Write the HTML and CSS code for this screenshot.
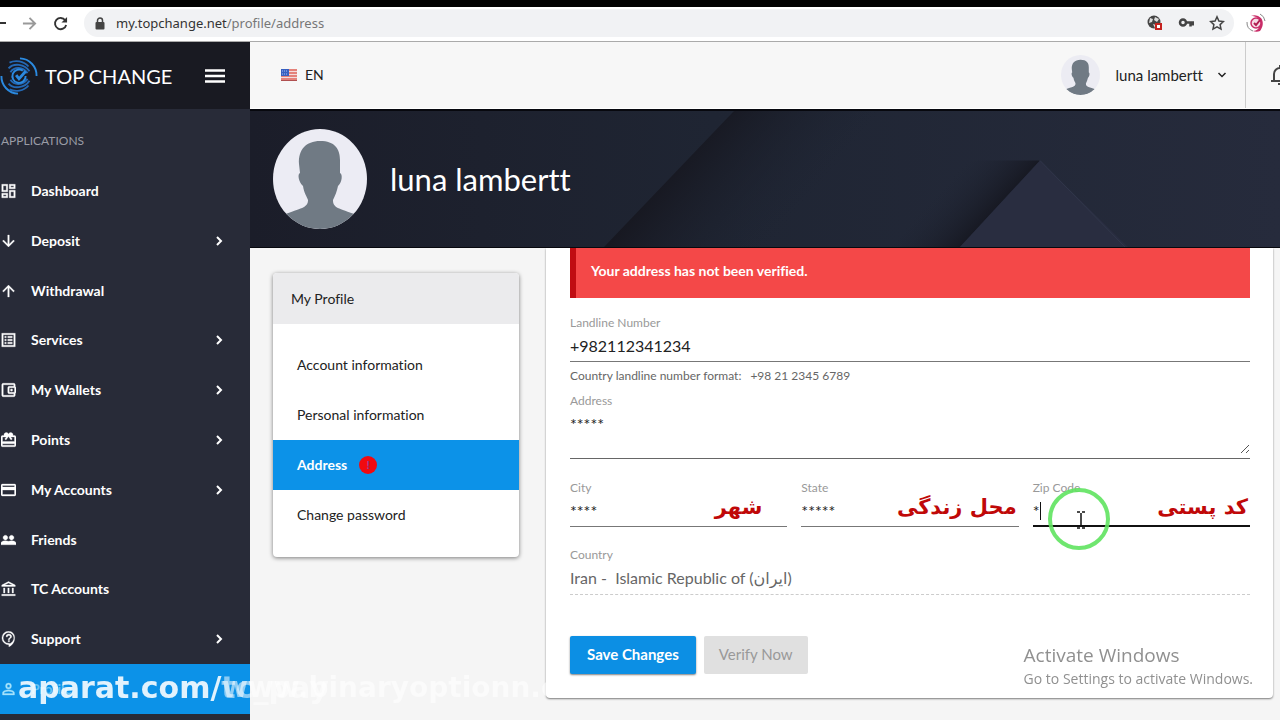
FILE: index.html
```html
<!DOCTYPE html>
<html lang="en">
<head>
<meta charset="utf-8">
<meta name="viewport" content="width=device-width, initial-scale=1">
<title>Top Change - Address</title>
<link rel="stylesheet" href="styles.css">
</head>
<body>
<svg class="defs" aria-hidden="true">
  <symbol id="chev" viewBox="0 0 10 12"><path d="M3 2l4 4-4 4" fill="none" stroke="currentColor" stroke-width="2"/></symbol>
  <symbol id="person" viewBox="0 0 94 100" preserveAspectRatio="none"><path fill="#707a84" d="M47 12C33 12 25 21 26 35L27 44C24 45 26 54 30 57C31 64 34 68 35 71C35 79 28 79 10 86C22 96 34 100 47 100S72 96 84 86C65 79 60 79 60 71C62 67 64 62 65 57C69 54 70 45 67 44L67 31C67 20 62 12 47 12Z"/></symbol>
  <symbol id="swirl" viewBox="0 0 40 40"><g fill="none" stroke="currentColor"><path d="M21 1.500A18 18 0 0 1 38.500 20M1.500 20A18 18 0 0 0 19 38.500" stroke-width="2"/><g stroke="#2468b4" stroke-width="2"><path d="M10 6C16 3 25 4 30 10M10 34C16 37 25 36 30 30"/><path d="M9 12C14 6 26 7 31 15M9 28C14 34 26 33 31 25"/><path d="M11 16C15 10 24 10 29 17M11 24C15 30 24 30 29 23"/></g><path d="M24 14.500A7 7 0 1 0 27 20" stroke-width="2"/><path d="M17 19l3 4 7-8" stroke-width="3"/></g></symbol>
</svg>

<header class="browser">
  <svg class="back" viewBox="0 0 6 16"><path d="M0 8h6" stroke="#333" stroke-width="2"/></svg>
  <svg class="nav-icon forward" viewBox="0 0 16 16"><path d="M1 8h13M8 2l6 6-6 6" fill="none" stroke="#999" stroke-width="2"/></svg>
  <svg class="nav-icon" viewBox="0 0 16 16"><path d="M13 4.500A6 6 0 1 0 14 9.500" fill="none" stroke="#333" stroke-width="2"/><path d="M15 1v6H9z" fill="#333"/></svg>
  <div class="omnibox">
    <svg class="lock" viewBox="0 0 10 13"><rect x="0.500" y="5" width="9" height="7.500" rx="1" fill="#444"/><path d="M2.500 5V3.500a2.500 2.500 0 0 1 5 0V5" fill="none" stroke="#444" stroke-width="1.500"/></svg>
    <span class="url">my.topchange.net<span class="path">/profile/address</span></span>
    <svg class="omni-icon" viewBox="0 0 16 16"><circle cx="7" cy="7" r="6.500" fill="#444"/><path d="M3 3l3 1-1 3-3 1zM8 2l4 2-2 3-3-2zM6 9l3 1-1 3z" fill="#ddd"/><rect x="8" y="8" width="7" height="7" fill="#c5221f"/><rect x="10" y="10" width="3" height="3" fill="#fff"/></svg>
    <svg class="omni-icon" viewBox="0 0 16 16"><circle cx="5" cy="7.500" r="3" fill="none" stroke="#444" stroke-width="2.500"/><path d="M8 7.500h7v3M12.500 7.500v4" fill="none" stroke="#444" stroke-width="2.500"/></svg>
    <svg class="omni-icon" viewBox="0 0 16 16"><path d="M8 1.800l1.900 4.200 4.500.5-3.300 3.100.9 4.500-4-2.300-4 2.300.9-4.500-3.300-3.100 4.500-.5z" fill="none" stroke="#444" stroke-width="1.500"/></svg>
  </div>
  <svg class="ext" viewBox="0 0 20 20"><path d="M5 3a9 9 0 0 1 10 2c3 4 2 9-1 13a9 9 0 0 1-7 0c4 0 7-3 7-8s-4-7-9-7z" fill="#c92d68"/><circle cx="10" cy="10" r="5" fill="#f5dce6" stroke="#c92d68" stroke-width="1.500"/><path d="M8 10l2 2 4-5" fill="none" stroke="#b01c50" stroke-width="2"/><path d="M1 9a9 9 0 0 0 6 9M14 1a9 9 0 0 1 5 7" fill="none" stroke="#888"/></svg>
</header>

<div class="app">
  <aside class="sidebar">
    <div class="brand">
      <svg class="logo"><use href="#swirl"/></svg>
      <span class="brand-name">TOP CHANGE</span>
      <button class="burger" aria-label="Toggle menu"><svg viewBox="0 0 20 14"><path d="M0 1.500h20M0 7h20M0 12.500h20" stroke="#fff" stroke-width="2.500"/></svg></button>
    </div>
    <div class="section">APPLICATIONS</div>
    <nav class="menu">
      <a href="#"><svg viewBox="2 2 20 20"><path d="M19 5v2h-4V5h4M9 5v6H5V5h4m10 8v6h-4v-6h4M9 17v2H5v-2h4M21 3h-8v6h8V3zM11 3H3v10h8V3zm10 8h-8v10h8V11zm-10 4H3v6h8v-6z"/></svg><span>Dashboard</span></a>
      <a href="#"><svg viewBox="2 2 20 20"><path d="M20 12l-1.410-1.410L13 16.170V4h-2v12.170l-5.580-5.590L4 12l8 8 8-8z"/></svg><span>Deposit</span><svg class="chev"><use href="#chev"/></svg></a>
      <a href="#"><svg viewBox="2 2 20 20"><path d="M4 12l1.410 1.410L11 7.830V20h2V7.830l5.580 5.590L20 12l-8-8-8 8z"/></svg><span>Withdrawal</span></a>
      <a href="#"><svg viewBox="2 2 20 20"><path fill-rule="evenodd" d="M3 3h18v18H3zM5 5v14h14V5zM7 7h2v2H7zM11 7h6v2h-6zM7 11h2v2H7zM11 11h6v2h-6zM7 15h2v2H7zM11 15h6v2h-6z"/></svg><span>Services</span><svg class="chev"><use href="#chev"/></svg></a>
      <a href="#"><svg viewBox="2 2 20 20"><path d="M21 7.280V5c0-1.100-.9-2-2-2H5c-1.110 0-2 .9-2 2v14c0 1.100.890 2 2 2h14c1.100 0 2-.9 2-2v-2.280c.590-.350 1-.980 1-1.720V9c0-.740-.410-1.370-1-1.720zM20 9v6h-7V9h7zM5 19V5h14v2h-6c-1.100 0-2 .9-2 2v6c0 1.100.9 2 2 2h6v2H5z"/><circle cx="16" cy="12" r="1.500"/></svg><span>My Wallets</span><svg class="chev"><use href="#chev"/></svg></a>
      <a href="#"><svg viewBox="2 2 20 20"><path d="M20 6h-2.180c.110-.310.180-.650.180-1 0-1.660-1.340-3-3-3-1.050 0-1.960.540-2.500 1.350l-.5.670-.5-.680C10.960 2.540 10.050 2 9 2 7.340 2 6 3.340 6 5c0 .350.070.690.180 1H4c-1.110 0-1.990.890-1.990 2L2 19c0 1.110.890 2 2 2h16c1.110 0 2-.890 2-2V8c0-1.110-.890-2-2-2zM20 19H4v-2h16v2zm0-5H4V8h5.080L7 10.830 8.620 12 12 7.400l3.380 4.600L17 10.830 14.920 8H20v6z"/></svg><span>Points</span><svg class="chev"><use href="#chev"/></svg></a>
      <a href="#"><svg viewBox="2 2 20 20"><path d="M20 4H4c-1.110 0-1.990.890-1.990 2L2 18c0 1.110.890 2 2 2h16c1.110 0 2-.890 2-2V6c0-1.110-.890-2-2-2zm0 14H4v-6h16v6zm0-10H4V6h16v2z"/></svg><span>My Accounts</span><svg class="chev"><use href="#chev"/></svg></a>
      <a href="#"><svg viewBox="1 2 22 20"><path d="M16.500 13c-1.200 0-3.070.340-4.500 1-1.430-.670-3.300-1-4.500-1C5.330 13 1 14.080 1 16.250V19h22v-2.750c0-2.170-4.330-3.250-6.500-3.250zM7.500 12c1.930 0 3.500-1.570 3.500-3.500S9.430 5 7.500 5 4 6.570 4 8.500 5.570 12 7.500 12zM16.500 12c1.930 0 3.500-1.570 3.500-3.500S18.430 5 16.500 5 13 6.570 13 8.500s1.570 3.500 3.500 3.500z"/></svg><span>Friends</span></a>
      <a href="#"><svg viewBox="1 1 21 21"><path d="M6.500 10h-2v7h2v-7zm6 0h-2v7h2v-7zm8.500 9H2v2h19v-2zm-2.500-9h-2v7h2v-7zm-7-6.740L16.710 6H6.290l5.210-2.740m0-2.260L2 6v2h19V6l-9.500-5z"/></svg><span>TC Accounts</span></a>
      <a href="#"><svg viewBox="1 2 21 22"><path d="M11.500 2a9.500 9.500 0 1 0 .5 19v3c4.860-2.340 8-7 8-11.500C21 6.500 16.740 2 11.500 2zM13 20v-1h-1.500a7.500 7.500 0 1 1 7.500-7.500c0 3.300-2.500 6.500-6 8.500zM11 15h2v2h-2zM12 6a4 4 0 0 0-4 4h2a2 2 0 1 1 4 0c0 2-3 1.700-3 4h2c0-1.800 3-2 3-4a4 4 0 0 0-4-4z"/></svg><span>Support</span><svg class="chev"><use href="#chev"/></svg></a>
      <a href="#" class="current"><svg viewBox="2 2 20 20"><path d="M12 6a2 2 0 1 1 0 4 2 2 0 0 1 0-4m0 9c2.700 0 5.800 1.290 6 2v1H6v-.990c.2-.720 3.300-2.010 6-2.010m0-11a4 4 0 1 0 0 8 4 4 0 0 0 0-8zm0 9c-2.670 0-8 1.340-8 4v3h16v-3c0-2.660-5.330-4-8-4z"/></svg><span>Profile</span></a>
    </nav>
  </aside>

  <div class="page">
    <div class="topbar">
      <button class="lang"><svg viewBox="0 0 16 12"><rect width="16" height="12" fill="#f3dcdc"/><path d="M0 1h16M0 4h16M0 7h16M0 10h16" stroke="#e0645a" stroke-width="1.500"/><rect width="8" height="7" fill="#3860c0"/><path d="M1 2h6M1 5h6" stroke="#a9bdf0" stroke-dasharray="1 1"/><rect y="11" width="16" height="1" fill="#b05050"/></svg>EN</button>
      <button class="user">
        <svg class="avatar"><use href="#person"/></svg>
        <span>luna lambertt</span>
        <svg class="down" viewBox="0 0 10 8"><path d="M1.500 2L5 5.500 8.500 2" fill="none" stroke="#222" stroke-width="1.500"/></svg>
      </button>
      <button class="bell" aria-label="Notifications"><svg viewBox="0 0 20 22"><path d="M1 17h18M4 17V10a6 6 0 0 1 12 0v7M10 4V1M8 20h4" fill="none" stroke="#444" stroke-width="2"/></svg></button>
    </div>

    <section class="hero">
      <svg class="hero-art" viewBox="0 0 1030 140" preserveAspectRatio="none" aria-hidden="true">
        <defs>
          <linearGradient id="base"><stop offset="0" stop-color="#1b1d29"/><stop offset=".45" stop-color="#1f2533"/><stop offset="1" stop-color="#262b3c"/></linearGradient>
          <linearGradient id="fold" gradientUnits="userSpaceOnUse" x1="420" y1="60" x2="520" y2="140"><stop offset="0" stop-color="#171821"/><stop offset="1" stop-color="#1e2432" stop-opacity="0"/></linearGradient>
          <linearGradient id="shade" gradientUnits="userSpaceOnUse" x1="750" y1="96" x2="710" y2="60"><stop offset="0" stop-color="#171923"/><stop offset="1" stop-color="#1f2432" stop-opacity="0"/></linearGradient>
        </defs>
        <rect width="1030" height="140" fill="url(#base)"/>
        <path d="M484 0L354 140H700V0Z" fill="url(#fold)"/>
        <path d="M790 51L710 140H600L700 51Z" fill="url(#shade)"/>
        <path d="M790 51L710 140H878Z" fill="#292d40"/>
        <path d="M790 51L875 140" stroke="#31374a" fill="none"/>
      </svg>
      <svg class="portrait"><use href="#person"/></svg>
      <h1>luna lambertt</h1>
    </section>

    <main class="content">
      <nav class="profile-menu">
        <h2>My Profile</h2>
        <a href="#">Account information</a>
        <a href="#">Personal information</a>
        <a href="#" class="active">Address <span class="alert-dot">!</span></a>
        <a href="#">Change password</a>
      </nav>

      <form class="card">
        <div class="alert">Your address has not been verified.</div>
        <div class="field">
          <label for="landline">Landline Number</label>
          <input id="landline" type="text" value="+982112341234">
          <p class="hint"><span>Country landline number format:</span><span>+98 21 2345 6789</span></p>
        </div>
        <div class="field address">
          <label for="address">Address</label>
          <textarea id="address">*****</textarea>
          <svg class="grip" viewBox="0 0 10 10"><path d="M1 9l8-8M6 9l3-3" stroke="#555" fill="none"/></svg>
        </div>
        <div class="row">
          <div class="field">
            <label for="city">City</label>
            <input id="city" type="text" value="****">
            <span class="note inset" lang="fa" dir="rtl">شهر</span>
          </div>
          <div class="field">
            <label for="state">State</label>
            <input id="state" type="text" value="*****">
            <span class="note" lang="fa" dir="rtl">محل زندگی</span>
          </div>
          <div class="field">
            <label for="zip">Zip Code</label>
            <input id="zip" class="focused" type="text" value="*">
            <span class="caret"></span>
            <span class="note" lang="fa" dir="rtl">کد پستی</span>
            <svg class="pointer" viewBox="0 0 64 64"><circle cx="32" cy="32" r="29" fill="none" stroke="#5fe35f" stroke-opacity=".9" stroke-width="4"/><path d="M30 25h3M35 25h3M34 26v14M30 41h3M35 41h3" stroke="#111" stroke-width="1.500" fill="none"/></svg>
          </div>
        </div>
        <div class="field country">
          <label for="country">Country</label>
          <input id="country" type="text" disabled value="Iran -  Islamic Republic of (ایران)">
        </div>
        <div class="actions">
          <button type="button" class="save">Save Changes</button>
          <button type="button" class="verify" disabled>Verify Now</button>
        </div>
      </form>
    </main>
  </div>
</div>

<div class="activate"><strong>Activate Windows</strong><span>Go to Settings to activate Windows.</span></div>
<div class="watermark">aparat.com/<span>tc_pay</span></div>
<div class="watermark site">www.binaryoptionn.com</div>
</body>
</html>
```

FILE: styles.css
```css
* { box-sizing: border-box; }
body {
  margin: 0;
  height: 100vh;
  min-height: 720px;
  display: flex;
  flex-direction: column;
  overflow: hidden;
  background: #f5f5f5;
  border-top: 7px solid #000;
  color: #222;
  font: 15px/20px Lato, "DejaVu Sans", sans-serif;
  font-variant-ligatures: no-common-ligatures;
}
button, input, textarea { font: inherit; font-variant-ligatures: inherit; color: inherit; border: 0; padding: 0; margin: 0; background: none; }
a { color: inherit; text-decoration: none; }
svg { display: block; flex: none; }
.defs { position: absolute; width: 0; height: 0; }

.browser {
  flex: none;
  display: flex;
  align-items: center;
  height: 35px;
  padding: 0 14px 2px 0;
  background: #fff;
  border-bottom: 1px solid #aaa;
}
.back { width: 6px; height: 16px; }
.nav-icon { width: 15px; height: 15px; margin-right: 16px; }
.forward { margin-left: 16px; }
.omnibox {
  flex: 1;
  display: flex;
  align-items: center;
  gap: 15px;
  height: 28px;
  margin-right: 12px;
  padding: 0 9px 0 10px;
  border-radius: 14px;
  background: #f1f2f4;
}
.lock { width: 10px; height: 13px; margin: 0 -4px 0 1px; }
.url { flex: 1; font: 13px/20px "Noto Sans", sans-serif; color: #333; }
.path { color: #777; }
.omni-icon { width: 16px; height: 16px; }
.ext { width: 20px; height: 20px; }

.app { flex: 1; display: flex; min-height: 0; }
.sidebar {
  flex: none;
  display: flex;
  flex-direction: column;
  width: 250px;
  padding-bottom: 6px;
  background: #282b38;
  color: #fff;
}
.brand {
  display: flex;
  align-items: center;
  height: 67px;
  padding-right: 25px;
  background: #191a22;
}
.logo { width: 38px; height: 40px; color: #2b8ae0; }
.brand-name { flex: 1; margin-left: 7px; font-size: 20px; line-height: 28px; }
.burger svg { width: 20px; height: 14px; }
.section { padding: 22px 0 15px 1px; font-size: 12px; color: #9a9ca6; }
.menu { flex: 1; display: flex; flex-direction: column; }
.menu a {
  flex: 1;
  display: flex;
  align-items: center;
  gap: 15px;
  padding: 0 26px 0 1px;
  font-weight: 700;
  font-size: 14px;
}
.menu a > svg { width: 15px; height: 16px; fill: currentColor; stroke: currentColor; stroke-width: .4px; }
.menu a > .chev { width: 10px; height: 12px; stroke: none; }
.menu span { flex: 1; }
.menu .current { background: #0c92e8; color: #a4e2fb; }
.current span { opacity: .6; }

.page { flex: 1; min-width: 0; display: flex; flex-direction: column; }
.topbar {
  display: flex;
  align-items: stretch;
  height: 67px;
  padding-left: 31px;
  background: #f7f7f7;
  border-bottom: 1px solid #fff;
  overflow: hidden;
}
.lang { display: flex; align-items: center; gap: 8px; font-size: 14px; }
.lang svg { width: 16px; height: 12px; }
.user { display: flex; align-items: center; margin-left: auto; padding-right: 18px; }
.avatar { width: 39px; height: 40px; margin-right: 16px; border-radius: 50%; background: #ececf3; }
.down { width: 10px; height: 8px; margin-left: 14px; }
.bell { width: 35px; padding-left: 24px; border-left: 1px solid #ccc; }
.bell svg { width: 20px; height: 22px; }

.hero {
  position: relative;
  flex: none;
  display: flex;
  align-items: center;
  gap: 23px;
  height: 139px;
  padding-left: 23px;
  border-top: 2px solid #07080e;
  border-bottom: 1px solid #07080e;
  background: #1c1f2b;
}
.hero-art { position: absolute; inset: 0; width: 100%; height: 100%; }
.portrait { position: relative; width: 94px; height: 100px; border-radius: 50%; background: #ececf4; }
h1 { position: relative; margin: 0; font-size: 31px; line-height: 40px; font-weight: 400; color: #fff; }

.content { display: flex; align-items: flex-start; gap: 27px; padding: 0 7px 20px 23px; }
.profile-menu {
  flex: none;
  width: 246px;
  margin-top: 25px;
  padding-bottom: 17px;
  border-radius: 4px;
  background: #fff;
  box-shadow: 0 1px 4px rgba(0, 0, 0, .5);
  overflow: hidden;
  font-size: 14px;
}
.profile-menu h2 { margin: 0 0 16px; padding: 15px 18px; font-size: 14px; line-height: 21px; font-weight: 400; background: #ebebed; }
.profile-menu a { display: flex; align-items: center; gap: 12px; height: 50px; padding-left: 24px; }
.profile-menu .active { background: #0c92e8; color: #fff; font-weight: 700; }
.alert-dot {
  width: 18px;
  height: 18px;
  border-radius: 50%;
  background: #f00a10;
  color: #8a3d9a;
  font-size: 12px;
  line-height: 18px;
  text-align: center;
}

.card {
  flex: 1;
  min-width: 0;
  padding: 0 23px 24px 24px;
  border-radius: 0 0 4px 4px;
  background: #fff;
  box-shadow: 0 1px 2px rgba(0, 0, 0, .5);
}
.alert {
  height: 50px;
  margin-bottom: 17px;
  padding: 14px 15px;
  border-left: 6px solid #c00d12;
  background: #f44848;
  color: #fff;
  font-weight: 700;
  font-size: 14px;
  line-height: 18px;
}
.field { position: relative; flex: 1; min-width: 0; }
.field label { display: block; margin-bottom: 1px; font-size: 12px; line-height: 16px; color: #999; }
.field input { display: block; width: 100%; height: 30px; padding-bottom: 2px; border-bottom: 1px solid #777; font-size: 16px; outline: 0; }
.field textarea {
  display: block;
  width: 100%;
  height: 49px;
  padding-top: 4px;
  border-bottom: 1px solid #666;
  resize: none;
  overflow: hidden;
  font-size: 16px;
  outline: 0;
}
.hint { display: flex; gap: 9px; margin: 6px 0 9px; font-size: 12px; line-height: 16px; color: #666; }
.grip { position: absolute; right: 0; bottom: 5px; width: 10px; height: 10px; }
.row { display: flex; gap: 14px; margin: 21px 0 20px; }
.row .focused { border-bottom: 2px solid #111; }
.country input { height: 31px; border-bottom: 1px dashed #ccc; color: #666; }
.note {
  position: absolute;
  right: 2px;
  bottom: 2px;
  font: 700 21px/36px "DejaVu Sans", sans-serif;
  color: #c00808;
  white-space: nowrap;
}
.note.inset { right: 25px; }
.caret { position: absolute; left: 7px; bottom: 7px; width: 1px; height: 18px; background: #111; }
.pointer { position: absolute; left: 14px; bottom: -24px; width: 64px; height: 64px; }
.actions { display: flex; gap: 8px; margin-top: 41px; }
.actions button { height: 38px; padding: 0 17px 2px; border-radius: 2px; }
.actions .save { background: #0c8fe4; color: #fff; font-weight: 700; box-shadow: 0 1px 2px rgba(0, 0, 0, .5); }
.actions .verify { padding: 0 15px 2px; background: #e0e0e0; color: #999; }

.activate {
  position: fixed;
  right: 27px;
  bottom: 31px;
  display: flex;
  flex-direction: column;
  font: 14px/20px "Open Sans", sans-serif;
  color: #909090;
}
.activate strong { font-size: 19px; line-height: 28px; font-weight: 400; }
.watermark {
  position: fixed;
  left: 18px;
  bottom: 14px;
  font: 700 30px/36px "DejaVu Sans", sans-serif;
  color: rgba(255, 255, 255, .88);
  white-space: nowrap;
}
.watermark span { opacity: .6; }
.watermark.site { left: 222px; font-size: 28px; color: rgba(255, 255, 255, .55); }
```
